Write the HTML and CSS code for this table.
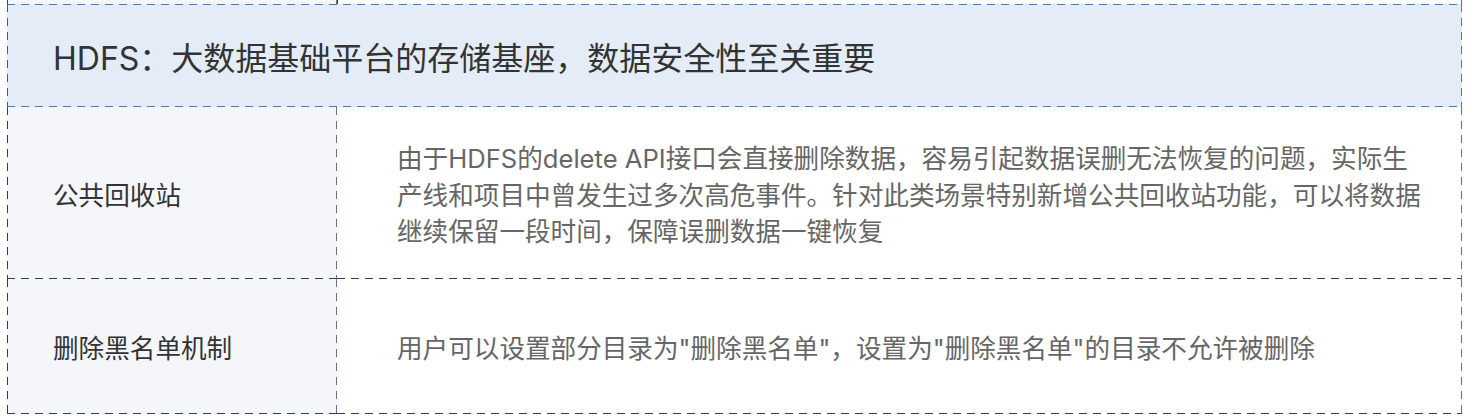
FILE: index.html
```html
<!DOCTYPE html>
<html lang="zh-CN">
<head>
<meta charset="utf-8">
<title>HDFS</title>
<link rel="stylesheet" href="styles.css">
</head>
<body>
<div class="sheet">
  <div class="row strip">
    <div class="cell-l"></div>
    <div class="cell-r"></div>
  </div>
  <div class="header">HDFS：大数据基础平台的存储基座，数据安全性至关重要</div>
  <div class="row row-1">
    <div class="cell-l"><span class="label">公共回收站</span></div>
    <div class="cell-r"><p class="desc">由于HDFS的delete API接口会直接删除数据，容易引起数据误删无法恢复的问题，实际生产线和项目中曾发生过多次高危事件。针对此类场景特别新增公共回收站功能，可以将数据继续保留一段时间，保障误删数据一键恢复</p></div>
  </div>
  <div class="row row-2">
    <div class="cell-l"><span class="label">删除黑名单机制</span></div>
    <div class="cell-r"><p class="desc">用户可以设置部分目录为"删除黑名单"，设置为"删除黑名单"的目录不允许被删除</p></div>
  </div>
</div>
</body>
</html>
```

FILE: styles.css
```css
:root {
  --blue: #3d7fcf;
  --edge: #2f3d5e;
  --div: #66728c;
  --font: "Inter", "Noto Sans CJK SC", "Noto Sans", sans-serif;
}

* { box-sizing: border-box; }

html, body {
  margin: 0;
  padding: 0;
  background: #ffffff;
}

body {
  font-family: var(--font);
}

.sheet {
  width: 1455px;
  margin-left: 7px;
  display: flex;
  flex-direction: column;
}

.row {
  display: grid;
  grid-template-columns: 330px 1125px;
}

.strip { height: 4px; }
.row-1 { height: 172px; }
.row-2 { height: 135px; }

.cell-l {
  display: flex;
  align-items: center;
  padding-left: 46px;
  background:
    repeating-linear-gradient(180deg, var(--edge) 0 8px, transparent 8px 14px) left top / 1px 100% no-repeat,
    repeating-linear-gradient(180deg, var(--div) 0 8px, transparent 8px 14px) right top / 1px 100% no-repeat,
    repeating-linear-gradient(90deg, var(--edge) 0 8px, transparent 8px 14px) left bottom / 100% 1px no-repeat,
    #f4f6fa;
}

.cell-r {
  display: flex;
  align-items: center;
  padding-left: 60px;
  padding-right: 36px;
  background:
    repeating-linear-gradient(180deg, var(--div) 0 8px, transparent 8px 14px) right top / 1px 100% no-repeat,
    repeating-linear-gradient(90deg, var(--edge) 0 8px, transparent 8px 14px) left bottom / 100% 1px no-repeat,
    #ffffff;
}

.strip .cell-l,
.strip .cell-r {
  background-size: 1px 100%, 1px 100%, 0 0;
}

.header {
  height: 103px;
  display: flex;
  align-items: center;
  padding-left: 46px;
  font-size: 32px;
  color: #333333;
  background:
    repeating-linear-gradient(90deg, var(--blue) 0 8px, transparent 8px 14px) left top / 100% 1px no-repeat,
    repeating-linear-gradient(90deg, var(--blue) 0 8px, transparent 8px 14px) left bottom / 100% 1px no-repeat,
    repeating-linear-gradient(180deg, #2a5eab 0 8px, transparent 8px 14px) left top / 1px 100% no-repeat,
    repeating-linear-gradient(180deg, var(--blue) 0 8px, transparent 8px 14px) right top / 1px 100% no-repeat,
    #e4ecf8;
}

.label {
  font-size: 25.6px;
  color: #333333;
}

.desc {
  margin: 0;
  padding-top: 6px;
  font-size: 25.6px;
  line-height: 36.5px;
  color: #666666;
}
```
